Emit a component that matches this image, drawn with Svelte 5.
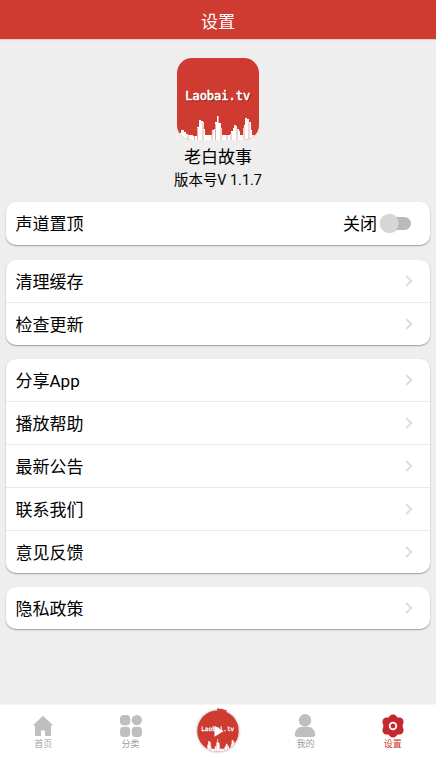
<script>
  const groups = [
    ["清理缓存", "检查更新"],
    ["分享App", "播放帮助", "最新公告", "联系我们", "意见反馈"],
    ["隐私政策"],
  ]
  const tabs = [
    { id: "home", label: "首页" },
    { id: "category", label: "分类" },
    { id: "player", label: "" },
    { id: "mine", label: "我的" },
    { id: "settings", label: "设置" },
  ]
  let selected = $state("settings")
  let pinned = $state(false)
</script>

{#snippet artwork()}
  <rect width="82" height="82" fill="#cf3a31" />
  <text class="brand shade" x="9" y="43">Laobai.tv</text>
  <text class="brand" x="8.200" y="42">Laobai.tv</text>
  <path fill="#fff" d="M2 82V75H4V72H7V74H9V76H11V77H16V78H20V69H22V62H24V63H26V64H27V71H28V77H35V72H37V71H38V64H40V58H41.500V65H44V70H45V77H53V76H54V73H56V70H57V67H59V68H60V71H62V73H63V77H66V70H67V67H68V60H70V61H72V64H74V72H75V77H79V82Z" />
  <path stroke="#dc8580" stroke-width=".7" d="M11 82V75M17.500 82V78M20.500 82V70M26 82V65M35 82V73M38.500 82V66M44 82V70M50 82V77M54 82V75M60 82V70M67 82V69M72 82V64M77 82V77" />
{/snippet}

<div class="page">
  <header>设置</header>

  <main>
    <div class="about">
      <svg class="logo" viewBox="0 0 82 82">{@render artwork()}</svg>
      <div class="name">老白故事</div>
      <div class="version">版本号V 1.1.7</div>
    </div>

    <section class="card first">
      <div class="row">
        <span>声道置顶</span>
        <button class="toggle" class:on={pinned} onclick={() => (pinned = !pinned)}>
          <span>{pinned ? "开启" : "关闭"}</span>
          <i class="track"></i>
        </button>
      </div>
    </section>

    {#each groups as rows}
      <section class="card">
        {#each rows as row}
          <div class="row">
            <span>{row}</span>
            <svg class="arrow" viewBox="0 0 8 12"><path d="M1.200 1L6.200 6L1.200 11" /></svg>
          </div>
        {/each}
      </section>
    {/each}
  </main>

  <nav>
    {#each tabs as { id, label }}
      <button class="tab" class:selected={selected === id} onclick={() => (selected = id)}>
        {#if id === "player"}
          <svg class="disc" viewBox="0 0 46 46">
            <defs><clipPath id="disc"><circle cx="23" cy="23" r="20.800" /></clipPath></defs>
            <circle cx="23" cy="23" r="22.500" fill="#e8e8e8" />
            <g clip-path="url(#disc)"><g transform="translate(2 1.500) scale(.51)">{@render artwork()}</g></g>
            <path d="M22 1.500A21.500 21.500 0 0 1 31.500 3.300" fill="none" stroke="#cf3a31" stroke-width="2" />
            <path d="M19.500 17.800L28.500 23.300L19.500 28.800Z" fill="#fff" />
          </svg>
        {:else}
          <svg class="icon" viewBox="0 0 24 24">
            {#if id === "home"}
              <path d="M12 1.800L22.300 11.500H20V21.200Q20 22 19.200 22H14V16.500H10V22H4.800Q4 22 4 21.200V11.500H1.700Z" />
            {:else if id === "category"}
              <rect x="1" y="1" width="10.200" height="10.200" rx="3.700" />
              <circle cx="17.800" cy="6.100" r="5.200" />
              <rect x="1" y="12.800" width="10.200" height="10.200" rx="3.700" />
              <rect x="12.800" y="12.800" width="10.200" height="10.200" rx="3.700" />
            {:else if id === "mine"}
              <circle cx="12" cy="6.300" r="6.200" />
              <path d="M1.800 21C1.800 16 5.500 12.800 9 12.800H15C18.500 12.800 22.200 16 22.200 21Q22.200 23 20 23H4Q1.800 23 1.800 21Z" />
            {:else}
              <path d="M12 .5C14.500 .5 15.500 2 16.500 3.500C18.500 3.300 20.800 3.300 22 5.500C23.300 7.800 22 9.800 21.500 12C22 14.200 23.300 16.200 22 18.500C20.800 20.700 18.500 20.700 16.500 20.500C15.500 22 14.500 23.500 12 23.500C9.500 23.500 8.500 22 7.500 20.500C5.500 20.700 3.200 20.700 2 18.500C.7 16.200 2 14.200 2.500 12C2 9.800 .7 7.800 2 5.500C3.200 3.300 5.500 3.300 7.500 3.500C8.500 2 9.500 .5 12 .5Z" />
              <circle cx="12" cy="12" r="3.300" class="ring" />
            {/if}
          </svg>
          <span>{label}</span>
        {/if}
      </button>
    {/each}
  </nav>
</div>

<style>
  :global(body) {
    margin: 0;
    background: #eee;
  }
  .page {
    display: flex;
    flex-direction: column;
    height: 759px;
    box-sizing: border-box;
    overflow: hidden;
    font-family: Roboto, "Noto Sans CJK SC", sans-serif;
    font-size: 17px;
    color: #000;
    background: #eee;
  }
  button {
    border: 0;
    padding: 0;
    background: none;
    color: inherit;
    font: inherit;
    cursor: pointer;
  }
  header {
    height: 39px;
    line-height: 44px;
    text-align: center;
    color: #fff;
    background: #cf3a31;
    box-shadow: 0 1px 1px #d9cfce;
  }
  main {
    flex: 1;
    padding: 19px 6px 0;
  }
  .about {
    display: flex;
    flex-direction: column;
    align-items: center;
    height: 144px;
  }
  .logo {
    display: block;
    width: 82px;
    height: 82px;
    border-radius: 15px;
  }
  .brand {
    font: 12px "DejaVu Sans Mono", monospace;
    fill: #fff;
    stroke: #fff;
    stroke-width: 0.6px;
  }
  .shade {
    fill: #8f211b;
    stroke: #8f211b;
  }
  .name {
    margin-top: 5px;
    line-height: 25px;
  }
  .version {
    font-size: 14.400px;
    line-height: 22px;
  }
  .card {
    margin-bottom: 14px;
    border-radius: 10px;
    background: #fff;
    box-shadow: 0 1px 1.500px rgba(0, 0, 0, 0.35);
  }
  .first {
    margin-bottom: 15px;
  }
  .row {
    display: flex;
    align-items: center;
    justify-content: space-between;
    height: 42px;
    padding: 0 17px 0 9.500px;
  }
  .row span {
    padding-bottom: 2px;
  }
  .first .row {
    height: 43px;
    padding-right: 19px;
  }
  .row + .row {
    border-top: 1px solid #e9e9e9;
  }
  .arrow {
    width: 8px;
    height: 12px;
    fill: none;
    stroke: #dedede;
    stroke-width: 2;
  }
  .toggle {
    display: flex;
    align-items: center;
  }
  .track {
    position: relative;
    width: 28px;
    height: 13px;
    margin-left: 6px;
    border-radius: 7px;
    background: #b9b9b9;
  }
  .track::before {
    position: absolute;
    content: '';
    top: -3px;
    left: -3px;
    width: 19px;
    height: 19px;
    border-radius: 50%;
    background: #d6d6d6;
    box-shadow: 0 0 1px rgba(0, 0, 0, 0.2);
  }
  .on .track::before {
    left: 12px;
  }
  nav {
    display: flex;
    height: 54px;
    margin: 0 -0.500px;
    border-top: 1px solid #f6f6f6;
    background: #fff;
  }
  .tab {
    display: flex;
    flex: 1;
    flex-direction: column;
    align-items: center;
    font-size: 9px;
    line-height: 12px;
    color: #a0a0a0;
  }
  .icon {
    width: 24px;
    height: 24px;
    margin-top: 9px;
    fill: #bfbfbf;
  }
  .disc {
    width: 46px;
    height: 46px;
    margin-top: 3px;
  }
  .selected {
    color: #d0342c;
  }
  .selected .icon {
    fill: #c4272e;
  }
  .ring {
    fill: none;
    stroke: #fff;
    stroke-width: 1.800;
  }
</style>
